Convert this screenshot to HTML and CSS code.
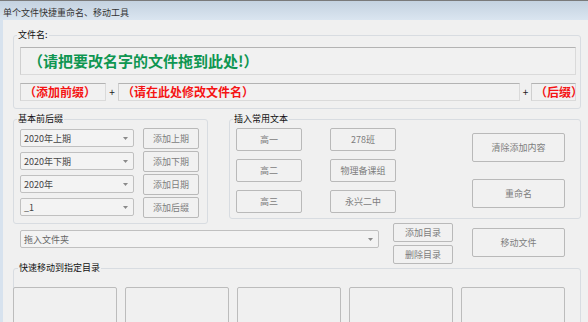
FILE: index.html
```html
<!DOCTYPE html>
<html lang="zh-CN">
<head>
<meta charset="utf-8">
<title>单个文件快捷重命名、移动工具</title>
<link rel="stylesheet" href="styles.css">
</head>
<body>
<div class="window">
  <div class="titlebar">单个文件快捷重命名、移动工具</div>
  <div class="client">
    <fieldset class="group g-name">
      <legend>文件名:</legend>
      <div class="textbox big green">（请把要改名字的文件拖到此处!）</div>
      <div class="name-row">
        <div class="textbox red prefix">（添加前缀）</div>
        <span class="plus">+</span>
        <div class="textbox red main">（请在此处修改文件名）</div>
        <span class="plus">+</span>
        <div class="textbox red suffix">（后缀）</div>
      </div>
    </fieldset>

    <div class="mid">
      <fieldset class="group g-basic">
        <legend>基本前后缀</legend>
        <div class="brow">
          <div class="combo c-basic"><span>2020年上期</span><svg class="arrow" viewBox="0 0 5 3"><path d="M0 0H5L2.5 3Z"/></svg></div>
          <button class="btn b-basic">添加上期</button>
        </div>
        <div class="brow">
          <div class="combo c-basic"><span>2020年下期</span><svg class="arrow" viewBox="0 0 5 3"><path d="M0 0H5L2.5 3Z"/></svg></div>
          <button class="btn b-basic">添加下期</button>
        </div>
        <div class="brow">
          <div class="combo c-basic"><span>2020年</span><svg class="arrow" viewBox="0 0 5 3"><path d="M0 0H5L2.5 3Z"/></svg></div>
          <button class="btn b-basic">添加日期</button>
        </div>
        <div class="brow">
          <div class="combo c-basic"><span>_1</span><svg class="arrow" viewBox="0 0 5 3"><path d="M0 0H5L2.5 3Z"/></svg></div>
          <button class="btn b-basic">添加后缀</button>
        </div>
      </fieldset>

      <fieldset class="group g-text">
        <legend>插入常用文本</legend>
        <div class="tcols">
          <div class="tcol">
            <button class="btn b-text">高一</button>
            <button class="btn b-text">高二</button>
            <button class="btn b-text">高三</button>
          </div>
          <div class="tcol">
            <button class="btn b-text">278班</button>
            <button class="btn b-text">物理备课组</button>
            <button class="btn b-text">永兴二中</button>
          </div>
          <div class="tcol tcol-act">
            <button class="btn b-act">清除添加内容</button>
            <button class="btn b-act">重命名</button>
          </div>
        </div>
      </fieldset>
    </div>

    <div class="dir-row">
      <div class="combo c-dir"><span class="ph">拖入文件夹</span><svg class="arrow" viewBox="0 0 5 3"><path d="M0 0H5L2.5 3Z"/></svg></div>
      <div class="dir-btns">
        <button class="btn b-dir">添加目录</button>
        <button class="btn b-dir">删除目录</button>
      </div>
      <button class="btn b-act b-move">移动文件</button>
    </div>

    <fieldset class="group g-quick">
      <legend>快速移动到指定目录</legend>
      <div class="slots">
        <div class="slot"></div>
        <div class="slot"></div>
        <div class="slot"></div>
        <div class="slot"></div>
        <div class="slot"></div>
      </div>
    </fieldset>
  </div>
</div>
</body>
</html>
```

FILE: styles.css
```css
* { box-sizing: border-box; }
html, body { margin: 0; padding: 0; }
body {
  width: 588px;
  height: 322px;
  overflow: hidden;
  background: #f0f0f0;
  font-family: "Noto Sans CJK SC", "Noto Sans", sans-serif;
  font-size: 9px;
  color: #1a1a1a;
}
.window { display: flex; flex-direction: column; height: 322px; }
.titlebar {
  height: 20px;
  border-top: 1px solid #7a7a7a;
  background: linear-gradient(#c4d2e0, #dae5f0);
  padding: 4px 0 0 3px;
  line-height: 15px;
  font-size: 9px;
  color: #333;
  white-space: nowrap;
}
.client {
  flex: 1;
  border-left: 3px solid #d7e2ee;
  padding-left: 10px;
  display: flex;
  flex-direction: column;
  align-items: flex-start;
}
.group {
  margin: 0;
  border: 1px solid #d8dce1;
  border-radius: 3px;
  min-width: 0;
}
.group legend {
  font-size: 9px;
  line-height: 10px;
  padding: 0 1px;
  margin-left: -3px;
  color: #111;
}

/* file name group */
.g-name {
  width: 568px;
  margin-top: 10px;
  padding: 7px 4px 7px 6px;
  display: flex;
  flex-direction: column;
  gap: 8px;
}
.textbox {
  background: #f1f1f1;
  border: 1px solid #dadada;
  border-top-color: #b3b3b3;
  border-left-color: #cfcfcf;
  white-space: nowrap;
  overflow: hidden;
  font-weight: bold;
}
.big { height: 28px; font-size: 15px; line-height: 26px; padding-left: 7px; }
.green { color: #0f9651; }
.red { color: #f51414; font-size: 12px; line-height: 16px; height: 18px; padding-left: 3px; }
.name-row { display: flex; align-items: center; }
.prefix { width: 86px; }
.main { flex: 1; }
.suffix { width: 45px; }
.plus { width: 12px; text-align: center; font-size: 10px; line-height: 18px; color: #222; }
.name-row .plus:nth-of-type(2) { width: 11px; }

/* middle */
.mid { display: flex; align-items: flex-start; margin-top: 5px; }
.g-basic {
  width: 195px;
  padding: 4px 6px 6px 6px;
  display: flex;
  flex-direction: column;
  gap: 3px;
}
.brow { display: flex; align-items: center; height: 20px; gap: 9px; }
.combo {
  display: flex;
  align-items: center;
  justify-content: space-between;
  height: 18px;
  border: 1px solid #c0c0c0;
  border-radius: 2px;
  background: #f3f3f3;
  padding: 0 5px 0 3px;
  color: #444;
  font-size: 9px;
}
.combo .arrow { width: 5px; height: 3px; fill: #8a8a8a; }
.c-basic { width: 114px; }
.btn {
  margin: 0;
  padding: 0;
  font-family: inherit;
  font-size: 9px;
  color: #7d7d7d;
  background: #f1f1f1;
  border: 1px solid #b9b9b9;
  border-radius: 2px;
}
.b-basic { width: 56px; height: 21px; }

.g-text {
  width: 352px;
  margin-left: 21px;
  padding: 4px 6px 5px 6px;
}
.tcols { display: flex; align-items: center; }
.tcol { display: flex; flex-direction: column; gap: 8px; }
.tcol + .tcol { margin-left: 28px; }
.tcol.tcol-act { margin-left: 76px; gap: 17px; }
.b-text { width: 66px; height: 23px; }
.b-act { width: 93px; height: 29px; }

/* directory row */
.dir-row { display: flex; align-items: flex-start; height: 40px; margin-top: -1px; }
.c-dir { width: 359px; margin: 7px 0 0 7px; }
.c-dir .ph { color: #666; }
.dir-btns { display: flex; flex-direction: column; gap: 3px; margin-left: 14px; }
.b-dir { width: 60px; height: 19px; }
.b-move { margin: 5px 0 0 19px; }

/* quick move */
.g-quick {
  width: 568px;
  padding: 14px 0 0 0;
}
.g-quick legend { margin-left: 4px; }
.slots { display: flex; gap: 8px; margin-left: -1px; }
.slot {
  width: 104px;
  height: 50px;
  border: 1px solid #bcbcbc;
  border-radius: 2px;
  background: #f0f0f0;
}
```
